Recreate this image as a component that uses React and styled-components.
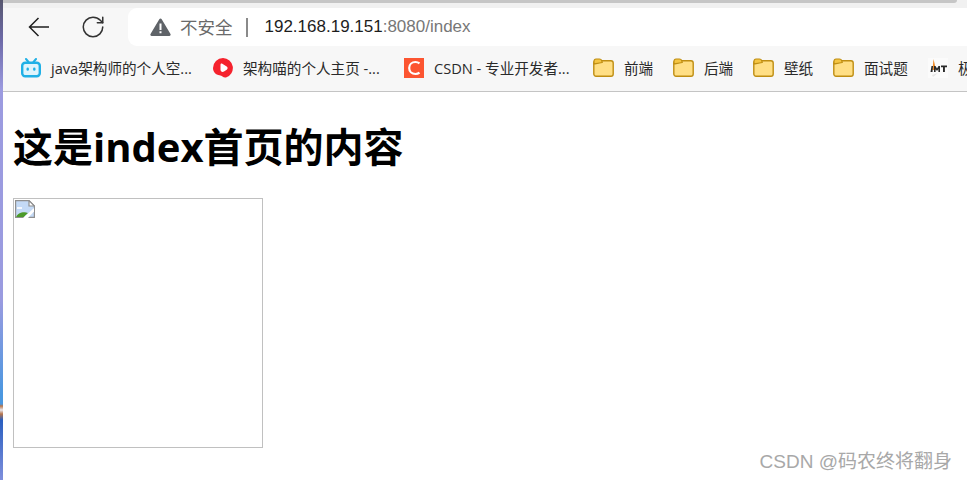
import React from "react";
import styled, { createGlobalStyle } from "styled-components";
import { RotateCw } from "lucide-react";

const GlobalStyle = createGlobalStyle`
  html, body {
    margin: 0;
    padding: 0;
    background: #ffffff;
    overflow: hidden;
  }
`;

const CJK = `"Open Sans", "Noto Sans CJK SC", sans-serif`;

function Bilibili() {
  return (
    <svg width="20" height="20" viewBox="0 0 20 20" fill="none">
      <path d="M5 1 7.500 4M15 1 12.500 4" stroke="#1fb0e6" strokeWidth="2" strokeLinecap="round" />
      <rect x="1.200" y="4.700" width="17.600" height="13.600" rx="3" fill="#dff4fc" stroke="#1fb0e6" strokeWidth="2.400" />
      <rect x="5.500" y="9.500" width="2.400" height="3.200" rx="1.200" fill="#1fb0e6" />
      <rect x="12.100" y="9.500" width="2.400" height="3.200" rx="1.200" fill="#1fb0e6" />
    </svg>
  );
}

function RedPlay() {
  return (
    <svg width="20" height="20" viewBox="0 0 20 20">
      <path d="M10 0a10 10 0 0 1 3 19.500C10 20 9.500 17.500 6.500 17.300 3 17 0 14 0 10A10 10 0 0 1 10 0Z" fill="#f5222d" />
      <path d="M7.500 6.800c0-1 .9-1.500 1.800-1l4.400 2.800c1.200.8 1.200 2.300 0 3.100l-2.700 1.800c-1.700 1.100-3.500-.1-3.500-1.800Z" fill="#ffffff" />
    </svg>
  );
}

function CsdnIcon() {
  return (
    <svg width="20" height="20" viewBox="0 0 20 20" fill="none">
      <rect width="20" height="20" fill="#fc5531" />
      <path d="M15.500 5.400A6.500 6.500 0 0 0 11.500 4C7.800 4 5.200 6.600 5.200 10s2.600 6 6.300 6a6.500 6.500 0 0 0 4-1.400" stroke="#ffffff" strokeWidth="2.200" />
    </svg>
  );
}

function Folder() {
  return (
    <svg width="21" height="20" viewBox="0 0 21 20">
      <rect x="0.800" y="2.800" width="19.400" height="15.400" rx="2.200" fill="#ffdf85" stroke="#bf8e12" strokeWidth="1.400" />
      <path d="M1 6V3.200C1 2 1.800 1 3 1h3.400c1.200 0 2 .7 2.400 1.800L9.200 4.500C6.500 4.800 4 5.400 1 6Z" fill="#f5c542" stroke="#bf8e12" strokeWidth="1.200" />
    </svg>
  );
}

function NiuIcon() {
  return (
    <svg width="20" height="20" viewBox="0 0 20 20">
      <rect width="20" height="20" fill="#fbfbfb" />
      <path d="M4 17 10 15 5 19Z" fill="#e6e6e6" />
      <path d="M5.500 1 8 12H4.500Z" fill="#f08a24" />
      <path d="M2.500 14 3.500 8H5L4.500 14ZM6 14V8h1.500L9 10.500 10.500 8H12v6H10.400V11L9 13 7.600 11V14ZM13 7.500h6v1.800h-2.100V14H15V9.300h-2Z" fill="#2a2a2a" />
    </svg>
  );
}

function BrokenImage() {
  return (
    <svg width="20" height="21" viewBox="0 0 20 21">
      <path d="M.6.6h13.400l5.400 5.400v11.400H.6Z" fill="#c4daf6" stroke="#8f8f8f" strokeWidth="1.200" />
      <path d="M14 .6V6h5.400Z" fill="#ffffff" stroke="#8f8f8f" strokeWidth="1.200" />
      <path d="M2 7h5v2H2Z" fill="#f4f8fe" />
      <path d="M1.200 17c1-3 4.500-5 8.800-4.800l3 .8-4.200 4Z" fill="#4c9a2a" />
      <path d="M8 18 19 8v3.500L13 18Z" fill="#ffffff" />
    </svg>
  );
}

const bookmarks = [
  { icon: <Bilibili />, label: "java架构师的个人空...", width: 192 },
  { icon: <RedPlay />, label: "架构喵的个人主页 -...", width: 191 },
  { icon: <CsdnIcon />, label: "CSDN - 专业开发者...", width: 189 },
  { icon: <Folder />, label: "前端", width: 80 },
  { icon: <Folder />, label: "后端", width: 80 },
  { icon: <Folder />, label: "壁纸", width: 80 },
  { icon: <Folder />, label: "面试题", width: 95 },
  { icon: <NiuIcon />, label: "极客时间", width: 100 },
];

export default function App() {
  return (
    <Screen>
      <GlobalStyle />
      <DesktopEdge />
      <Browser>
        <TopLine>
          <TabShadow />
        </TopLine>
        <Toolbar>
          <NavButtons>
            <NavButton>
              <svg width="21" height="20" viewBox="0 0 21 20" fill="none">
                <path d="M1.500 10H21M10.500 1 1.500 10l9 9" stroke="#1f1f1f" strokeWidth="1.500" />
              </svg>
            </NavButton>
            <NavButton>
              <RotateCw size={26} strokeWidth={1.4} color="#333" />
            </NavButton>
          </NavButtons>
          <AddressBar>
            <svg width="21" height="18" viewBox="0 0 21 18">
              <path d="M10.500 0.500c.5 0 .9.3 1.200.8l8.800 14.600c.5.9-.1 2-1.200 2H1.700c-1.100 0-1.700-1.100-1.200-2L9.300 1.300c.3-.5.7-.8 1.200-.8Z" fill="#5f6368" />
              <path d="M9.500 5.500h2V12h-2ZM9.500 13.300h2v2h-2Z" fill="#ffffff" />
            </svg>
            <Insecure>不安全</Insecure>
            <Divider />
            <Url>
              192.168.19.151<UrlRest>:8080/index</UrlRest>
            </Url>
          </AddressBar>
        </Toolbar>
        <BookmarkBar>
          {bookmarks.map((b) => (
            <Bookmark key={b.label} $width={b.width}>
              {b.icon}
              <BookmarkLabel>{b.label}</BookmarkLabel>
            </Bookmark>
          ))}
        </BookmarkBar>
        <Page>
          <Heading>这是index首页的内容</Heading>
          <ImageFrame>
            <BrokenImage />
          </ImageFrame>
        </Page>
      </Browser>
      <Watermark>CSDN @码农终将翻身</Watermark>
    </Screen>
  );
}

const Screen = styled.div`
  position: relative;
  display: flex;
  width: 967px;
  height: 480px;
  overflow: hidden;
  background: #ffffff;
`;

const DesktopEdge = styled.div`
  width: 3px;
  flex-shrink: 0;
  background: linear-gradient(
    180deg,
    #57576f 0,
    #6d6aa8 40px,
    #9c9be0 90px,
    #9a9be0 300px,
    #4a97e0 395px,
    #4a97e0 404px,
    #b9764a 406px,
    #e8e8f0 410px,
    #b9764a 414px,
    #2a5fc0 420px,
    #7f8fdc 480px
  );
`;

const Browser = styled.div`
  flex: 1;
  min-width: 0;
  display: flex;
  flex-direction: column;
`;

const TopLine = styled.div`
  height: 8px;
  background: #f1f1f1;
`;

const TabShadow = styled.div`
  width: 954px;
  height: 3px;
  background: #c6c6c6;
  border-radius: 0 0 4px 0;
`;

const Toolbar = styled.div`
  height: 38px;
  display: flex;
  background: #f7f7f7;
`;

const NavButtons = styled.div`
  width: 125px;
  flex-shrink: 0;
  display: flex;
  align-items: center;
  padding: 0 0 0 21px;
  gap: 27px;
  box-sizing: border-box;
`;

const NavButton = styled.div`
  width: 28px;
  height: 28px;
  display: flex;
  align-items: center;
  justify-content: center;
`;

const AddressBar = styled.div`
  flex: 1;
  display: flex;
  align-items: center;
  padding-left: 22px;
  background: #ffffff;
  border-radius: 9px 0 0 9px;
`;

const Insecure = styled.span`
  margin: 0 0 2px 9px;
  font-family: ${CJK};
  font-size: 17.500px;
  color: #6a6a6a;
`;

const Divider = styled.span`
  width: 2px;
  height: 19px;
  margin: 0 17px 0 13px;
  background: #8a8a8a;
`;

const Url = styled.span`
  font-family: "Liberation Sans", sans-serif;
  font-size: 17px;
  color: #1d1d1d;
`;

const UrlRest = styled.span`
  color: #777777;
`;

const BookmarkBar = styled.div`
  height: 43px;
  display: flex;
  align-items: center;
  padding: 0 0 2px 18px;
  background: #f7f7f7;
  border-bottom: 1px solid #c4c4c4;
  overflow: hidden;
`;

const Bookmark = styled.div`
  width: ${(p) => p.$width}px;
  flex-shrink: 0;
  display: flex;
  align-items: center;
  gap: 10px;

  svg {
    flex-shrink: 0;
  }
`;

const BookmarkLabel = styled.span`
  font-family: ${CJK};
  font-size: 14.600px;
  color: #2a2a2a;
  white-space: nowrap;
`;

const Page = styled.div`
  flex: 1;
  padding: 0 10px;
  background: #ffffff;
`;

const Heading = styled.h1`
  margin: 28px 0 25px;
  font-family: "Open Sans", "Noto Sans CJK SC", sans-serif;
  font-size: 40px;
  font-weight: 700;
  line-height: 53px;
  color: #000000;
`;

const ImageFrame = styled.div`
  width: 250px;
  height: 250px;
  box-sizing: border-box;
  border: 1px solid #c0c0c0;
  padding: 1px;
`;

const Watermark = styled.div`
  position: absolute;
  right: 15px;
  bottom: 7px;
  font-family: "Liberation Sans", "Noto Sans CJK SC", sans-serif;
  font-size: 19px;
  color: #a8a8a8;
`;
